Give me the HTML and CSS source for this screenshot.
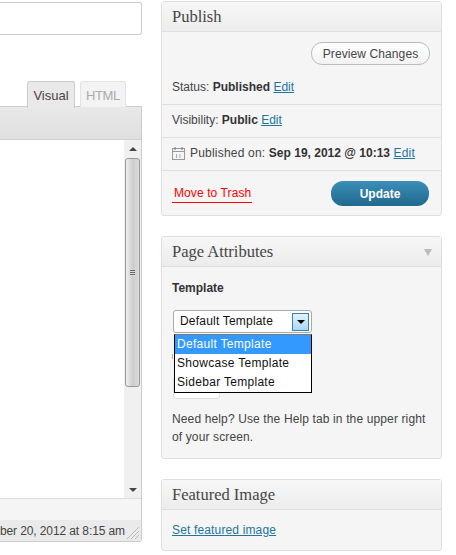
FILE: index.html
```html
<!DOCTYPE html>
<html>
<head>
    <title>Edit Page</title>
    <link rel="stylesheet" href="styles.css">
</head>
<body>
    <div class="page">
        <div class="main">
            <div class="title-input"></div>
            <div class="tabs">
                <span class="tab active">Visual</span>
                <span class="tab html">HTML</span>
            </div>
            <div class="editor">
                <div class="toolbar"></div>
                <div class="edit-area">
                    <div class="blank"></div>
                    <div class="scrollbar">
                        <div class="arrow-btn"><span class="arrow-up"></span></div>
                        <div class="thumb"><span class="grip"></span></div>
                        <div class="track"></div>
                        <div class="arrow-btn"><span class="arrow-down"></span></div>
                    </div>
                </div>
                <div class="path-bar"></div>
                <div class="status-bar">
                    <span class="last-edit">ber 20, 2012 at 8:15 am</span>
                    <svg class="resize" width="14" height="14" viewBox="0 0 14 14">
                        <path d="M1 13L13 1M5 13L13 5M9 13L13 9" stroke="#bbb" fill="none"/>
                    </svg>
                </div>
            </div>
        </div>
        <div class="side">
            <div class="box publish">
                <h3 class="box-head">Publish</h3>
                <div class="preview-row"><a class="btn-preview">Preview Changes</a></div>
                <div class="row status">Status: <b>Published</b> <a class="link">Edit</a></div>
                <div class="row">Visibility: <b>Public</b> <a class="link">Edit</a></div>
                <div class="row date">
                    <svg class="cal" width="13" height="13" viewBox="0 0 13 13">
                        <rect x="0.5" y="1.5" width="12" height="11" fill="#f5f5f5" stroke="#999"/>
                        <path d="M1 4.5H12" stroke="#999"/>
                        <path d="M3 0V3M10 0V3" stroke="#777"/>
                        <path d="M4.5 7V11M8 7V11" stroke="#aaa"/>
                    </svg>
                    <span>Published on: <b>Sep 19, 2012 @ 10:13</b> <a class="link">Edit</a></span>
                </div>
                <div class="actions">
                    <a class="trash">Move to Trash</a>
                    <a class="btn-update">Update</a>
                </div>
            </div>
            <div class="box attrs">
                <h3 class="box-head">Page Attributes<span class="caret"></span></h3>
                <div class="attrs-body">
                    <p class="label">Template</p>
                    <div class="select-wrap">
                        <div class="select">
                            <span>Default Template</span>
                            <span class="select-btn"><span class="select-arrow"></span></span>
                        </div>
                        <div class="order-input"></div>
                        <span class="focus-mark"></span>
                        <ul class="dropdown">
                            <li class="selected">Default Template</li>
                            <li>Showcase Template</li>
                            <li>Sidebar Template</li>
                        </ul>
                    </div>
                    <p class="help">Need help? Use the Help tab in the upper right of your screen.</p>
                </div>
            </div>
            <div class="box featured">
                <h3 class="box-head">Featured Image</h3>
                <div class="featured-body"><a class="link">Set featured image</a></div>
            </div>
        </div>
    </div>
</body>
</html>
```

FILE: styles.css
```css
html, body {
    margin: 0;
    background: #fff;
}
body {
    font-family: "Liberation Sans", Arial, sans-serif;
    font-size: 12px;
    color: #333;
    overflow: hidden;
}
.page {
    display: flex;
    align-items: flex-start;
    gap: 19px;
    padding-top: 1px;
    height: 554px;
}
.main {
    width: 142px;
    flex: none;
}
.title-input {
    height: 31px;
    margin-top: 1px;
    background: #fff;
    border: 1px solid #ccc;
    border-left: none;
    border-radius: 0 3px 3px 0;
}
.tabs {
    display: flex;
    gap: 5px;
    height: 25px;
    margin-top: 46px;
    padding-left: 27px;
    position: relative;
    z-index: 1;
}
.tab {
    width: 44px;
    height: 25px;
    line-height: 27px;
    text-align: center;
    font-size: 13px;
    color: #aaa;
    background: #f3f3f3;
    border: 1px solid #e3e3e3;
    border-bottom: none;
    border-radius: 3px 3px 0 0;
}
.tab.html {
    letter-spacing: -0.4px;
}
.tab.active {
    width: 46px;
    height: 26px;
    color: #444;
    background: #e9e9e9;
    border-color: #ccc;
}
.editor {
    border: 1px solid #ccc;
    border-left: none;
    border-radius: 0 0 3px 0;
    height: 434px;
    display: flex;
    flex-direction: column;
}
.toolbar {
    height: 32px;
    background: linear-gradient(#e9e9e9, #dfdfdf);
    border-bottom: 1px solid #d0d0d0;
    flex: none;
}
.edit-area {
    display: flex;
    height: 358px;
    flex: none;
    background: #fff;
}
.blank {
    flex: 1;
}
.scrollbar {
    width: 17px;
    flex: none;
    display: flex;
    flex-direction: column;
    background: #f0f0f0;
}
.arrow-btn {
    height: 17px;
    display: flex;
    align-items: center;
    justify-content: center;
    flex: none;
}
.arrow-up, .arrow-down {
    width: 0;
    height: 0;
    border-left: 4px solid transparent;
    border-right: 4px solid transparent;
}
.arrow-up {
    border-bottom: 4px solid #444;
}
.arrow-down {
    border-top: 4px solid #444;
}
.thumb {
    height: 229px;
    margin: 1px 1px 0;
    flex: none;
    box-sizing: border-box;
    border: 1px solid #999;
    border-radius: 3px;
    background: linear-gradient(to right, #eee, #ccc 55%, #ddd);
    display: flex;
    align-items: center;
    justify-content: center;
}
.grip {
    width: 5px;
    height: 6px;
    background: repeating-linear-gradient(#666 0 1px, #ddd 1px 2px);
}
.track {
    flex: 1;
}
.path-bar {
    height: 21px;
    flex: none;
    background: #f5f5f5;
    border-top: 1px solid #ddd;
}
.status-bar {
    flex: 1;
    display: flex;
    justify-content: flex-end;
    align-items: center;
    background: #eaeaea;
    overflow: hidden;
    position: relative;
    padding-right: 16px;
}
.last-edit {
    white-space: nowrap;
    flex: none;
    color: #444;
    font-size: 12px;
    letter-spacing: -0.1px;
}
.resize {
    position: absolute;
    right: 1px;
    bottom: 1px;
}
.side {
    width: 281px;
    flex: none;
}
.box {
    box-sizing: border-box;
    background: #f5f5f5;
    border: 1px solid #dfdfdf;
    border-radius: 3px;
    margin-bottom: 20px;
    line-height: 17px;
}
.box-head {
    margin: 0;
    height: 29px;
    line-height: 30px;
    padding-left: 10px;
    font-family: "Liberation Serif", Georgia, serif;
    font-size: 16.5px;
    font-weight: normal;
    color: #464646;
    background: linear-gradient(#f7f7f7, #ececec);
    border-bottom: 1px solid #dfdfdf;
    position: relative;
}
.caret {
    position: absolute;
    right: 9px;
    top: 12px;
    width: 0;
    height: 0;
    border-left: 4px solid transparent;
    border-right: 4px solid transparent;
    border-top: 7px solid #bbb;
}
.publish {
    height: 215px;
}
.attrs {
    height: 223px;
}
.featured {
    height: 72px;
}
.link {
    color: #21759b;
    text-decoration: underline;
}
b {
    color: #333;
}
.preview-row {
    display: flex;
    justify-content: flex-end;
    padding: 10px 11px 0 0;
}
.btn-preview {
    width: 117px;
    height: 21px;
    line-height: 22px;
    text-align: center;
    color: #464646;
    background: linear-gradient(#fff, #f2f2f2);
    border: 1px solid #bbb;
    border-radius: 11px;
    font-size: 12px;
    letter-spacing: 0.1px;
}
.row {
    height: 30px;
    line-height: 30px;
    padding: 0 0 2px 10px;
    border-bottom: 1px solid #dfdfdf;
    white-space: nowrap;
    color: #444;
}
.status {
    margin-top: 7px;
}
.date {
    display: flex;
    align-items: center;
    gap: 5px;
    letter-spacing: 0.2px;
}
.date b {
    letter-spacing: 0;
}
.cal {
    flex: none;
}
.actions {
    display: flex;
    justify-content: space-between;
    align-items: center;
    padding: 10px 12px 0 10px;
}
.trash {
    color: #f00;
    border-bottom: 1px solid #f00;
    line-height: 16px;
    padding: 0 1px 1px 2px;
    letter-spacing: 0.1px;
}
.btn-update {
    width: 98px;
    height: 25px;
    line-height: 26px;
    text-align: center;
    font-weight: bold;
    color: #fff;
    background: linear-gradient(#3a8fb8, #21688d);
    border-radius: 12px;
}
.attrs-body {
    padding: 13px 10px 0;
}
.label {
    margin: 0;
    font-weight: bold;
    color: #333;
}
.select-wrap {
    position: relative;
    margin-top: 13px;
}
.select {
    width: 139px;
    height: 23px;
    margin-left: 1px;
    box-sizing: border-box;
    background: #fff;
    border: 1px solid #aaa;
    border-radius: 3px;
    display: flex;
    align-items: center;
    justify-content: space-between;
    padding: 0 2px 0 6px;
    color: #111;
    letter-spacing: 0.2px;
}
.select-btn {
    width: 15px;
    height: 16px;
    border: 1px solid #3c7fb1;
    background: linear-gradient(#e5f4fc, #a7d9f5);
    display: flex;
    align-items: center;
    justify-content: center;
}
.select-arrow {
    width: 0;
    height: 0;
    border-left: 4px solid transparent;
    border-right: 4px solid transparent;
    border-top: 4px solid #000;
}
.order-input {
    width: 47px;
    height: 23px;
    margin: 43px 0 0 1px;
    box-sizing: border-box;
    background: #fff;
    border: 1px solid #dfdfdf;
    border-radius: 3px;
}
.focus-mark {
    position: absolute;
    left: 0;
    top: 44px;
    width: 1px;
    height: 5px;
    background: #cfae8c;
}
.dropdown {
    position: absolute;
    left: 2px;
    top: 24px;
    width: 138px;
    box-sizing: border-box;
    margin: 0;
    padding: 0;
    list-style: none;
    background: #fff;
    border: 1px solid #000;
    border-top-color: #7a7a7a;
    color: #111;
    letter-spacing: 0.3px;
}
.dropdown li {
    height: 19px;
    line-height: 19px;
    padding-left: 2px;
}
.dropdown .selected {
    background: #3399ff;
    color: #fff;
}
.help {
    margin: 11px 0 0;
    color: #444;
    line-height: 18px;
    letter-spacing: 0.13px;
}
.featured-body {
    padding: 12px 10px;
    letter-spacing: 0.15px;
}
```
